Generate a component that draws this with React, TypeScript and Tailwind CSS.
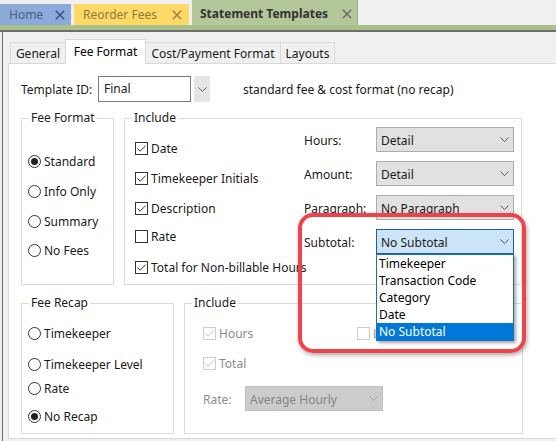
import React from "react";

const Chevron = ({ color = "#555" }: { color?: string }) => (
  <svg width="9" height="5" viewBox="0 0 9 5">
    <path d="M0.5 0.5 L4.5 4.5 L8.5 0.5" fill="none" stroke={color} strokeWidth="1" />
  </svg>
);

const CloseX = ({ color }: { color: string }) => (
  <svg width="10" height="10" viewBox="0 0 10 10">
    <path d="M0.8 0.8 L9.2 9.2 M9.2 0.8 L0.8 9.2" stroke={color} strokeWidth="1.5" />
  </svg>
);

const Check = ({ checked, disabled }: { checked?: boolean; disabled?: boolean }) => (
  <span
    className={`w-[13px] h-[13px] border bg-white flex items-center justify-center shrink-0 ${
      disabled ? "border-[#cdcdcd]" : "border-[#333333]"
    }`}
  >
    {checked && (
      <svg width="11" height="11" viewBox="0 0 11 11">
        <path
          d="M1.5 5.5 L4.2 8.2 L9.6 2.6"
          fill="none"
          stroke={disabled ? "#c2c2c2" : "#333333"}
          strokeWidth="1"
        />
      </svg>
    )}
  </span>
);

const Radio = ({ checked }: { checked?: boolean }) => (
  <span className="w-[13px] h-[13px] rounded-full border border-[#333333] bg-white flex items-center justify-center shrink-0">
    {checked && <span className="w-[7px] h-[7px] rounded-full bg-[#222222]" />}
  </span>
);

const CheckRow = ({
  label,
  checked,
  disabled,
  className = "",
}: {
  label: string;
  checked?: boolean;
  disabled?: boolean;
  className?: string;
}) => (
  <div className={`h-[20px] flex items-center gap-[3px] whitespace-nowrap ${className}`}>
    <Check checked={checked} disabled={disabled} />
    <span className={`pt-[2px] ${disabled ? "text-[#8d8d8d]" : ""}`}>{label}</span>
  </div>
);

const RadioRow = ({ label, checked, className = "" }: { label: string; checked?: boolean; className?: string }) => (
  <div className={`h-[20px] flex items-center gap-[3px] whitespace-nowrap ${className}`}>
    <Radio checked={checked} />
    <span className="pt-[2px]">{label}</span>
  </div>
);

const Combo = ({ value }: { value: string }) => (
  <div className="w-[138px] h-[25px] bg-[#e1e1e1] border border-[#adadad] flex items-center justify-between pl-[4px] pr-[4px]">
    <span className="pt-[2px]">{value}</span>
    <Chevron />
  </div>
);

const Group = ({
  title,
  className = "",
  children,
}: {
  title: string;
  className?: string;
  children?: React.ReactNode;
}) => (
  <div className={`border border-[#dcdcdc] shrink-0 ${className}`}>
    <div className="-mt-[9px] ml-[7px] px-[2px] bg-white w-fit leading-[16px]">{title}</div>
    {children}
  </div>
);

const subtotalItems = ["Timekeeper", "Transaction Code", "Category", "Date", "No Subtotal"];

export default function App() {
  return (
    <div className="w-[556px] h-[441px] bg-[#f0f0f0] overflow-hidden relative flex flex-col text-[12px] leading-[16px] text-[#1a1a1a] font-['Noto_Sans',sans-serif]">
      {/* document tabs */}
      <div className="h-[25px] flex items-end gap-[3px] shrink-0">
        <div className="w-[71px] h-[21px] bg-[#8eaadb] flex items-center justify-between pl-[9px] pr-[6px] text-[#4e5d7c]">
          <span>Home</span>
          <CloseX color="#35528f" />
        </div>
        <div className="w-[115px] h-[21px] bg-[#ffd966] flex items-center justify-between pl-[9px] pr-[7px] text-[#8c7940]">
          <span>Reorder Fees</span>
          <CloseX color="#9a8444" />
        </div>
        <div className="w-[166px] h-[25px] bg-[#b4c79b] border-r border-[#98b07c] flex items-center justify-between pl-[8px] pr-[5px] pt-[3px] font-bold text-[#333333]">
          <span>Statement Templates</span>
          <CloseX color="#6a6a6a" />
        </div>
      </div>
      <div className="h-[7px] bg-[#a9c08b] border-b-2 border-[#6e6e6e] shrink-0" />

      {/* window body */}
      <div className="flex-1 ml-[2px] border-l border-[#6b6b6b] pl-[5px] pt-[7px] flex flex-col">
        {/* page tabs */}
        <div className="flex items-end pl-[2px]">
          <div className="w-[56px] h-[21px] bg-[#f0f0f0] border border-b-0 border-[#d9d9d9] flex items-center justify-center pt-[1px]">
            General
          </div>
          <div className="-ml-px w-[81px] h-[25px] bg-white border border-b-0 border-[#d9d9d9] flex items-center justify-center relative z-10 -mb-px text-black">
            Fee Format
          </div>
          <div className="-ml-px w-[136px] h-[21px] bg-[#f0f0f0] border border-b-0 border-[#d9d9d9] flex items-center justify-center pt-[1px]">
            Cost/Payment Format
          </div>
          <div className="-ml-px w-[55px] h-[21px] bg-[#f0f0f0] border border-b-0 border-[#d9d9d9] flex items-center justify-center pt-[1px]">
            Layouts
          </div>
        </div>

        {/* page */}
        <div className="w-[600px] h-[376px] bg-white border border-[#d9d9d9] pt-[12px] pl-[12px] shrink-0">
          <div className="flex items-center h-[26px]">
            <span className="w-[77px] pt-[2px]">Template ID:</span>
            <div className="w-[93px] h-[26px] border border-[#7a7a7a] flex items-center pl-[5px]">Final</div>
            <div className="ml-[3px] w-[16px] h-[26px] bg-[#e5e5e5] flex items-center justify-center">
              <Chevron color="#606060" />
            </div>
            <span className="ml-[33px] pt-[2px]">standard fee &amp; cost format (no recap)</span>
          </div>

          {/* top groups */}
          <div className="flex gap-[10px] mt-[16px]">
            <Group title="Fee Format" className="w-[93px] h-[167px]">
              <div className="pl-[6px] pt-[25px] flex flex-col">
                <RadioRow label="Standard" checked />
                <RadioRow label="Info Only" className="mt-[10px]" />
                <RadioRow label="Summary" className="mt-[10px]" />
                <RadioRow label="No Fees" className="mt-[9px]" />
              </div>
            </Group>

            <Group title="Include" className="w-[398px] h-[167px]">
              <div className="flex">
                <div className="w-[179px] pl-[10px] pt-[12px] flex flex-col">
                  <CheckRow label="Date" checked />
                  <CheckRow label="Timekeeper Initials" checked className="mt-[10px]" />
                  <CheckRow label="Description" checked className="mt-[10px]" />
                  <CheckRow label="Rate" className="mt-[8px]" />
                  <CheckRow label="Total for Non-billable Hours" checked className="mt-[11px]" />
                </div>
                <div className="pt-[1px] flex flex-col gap-[9px]">
                  <div className="flex items-center">
                    <span className="w-[72px] pt-[2px]">Hours:</span>
                    <Combo value="Detail" />
                  </div>
                  <div className="flex items-center">
                    <span className="w-[72px] pt-[2px]">Amount:</span>
                    <Combo value="Detail" />
                  </div>
                  <div className="flex items-center">
                    <span className="w-[72px] pt-[2px]">Paragraph:</span>
                    <Combo value="No Paragraph" />
                  </div>
                  <div className="flex items-center">
                    <span className="w-[72px] pt-[2px]">Subtotal:</span>
                    <div className="relative">
                      <div className="w-[138px] h-[25px] bg-[#cce4f7] border border-[#1b5fa6] flex items-center justify-between pl-[4px] pr-[4px]">
                        <span className="pt-[2px]">No Subtotal</span>
                        <Chevron />
                      </div>
                      <div className="absolute left-0 top-[25px] z-20 w-[138px] bg-white border border-[#1c6fc0] shadow-[2px_2px_3px_rgba(0,0,0,0.35)]">
                        {subtotalItems.map((item) => (
                          <div
                            key={item}
                            className={`h-[17px] pl-[2px] pt-[1px] flex items-center ${
                              item === "No Subtotal" ? "bg-[#0078d7] text-white" : "text-black"
                            }`}
                          >
                            {item}
                          </div>
                        ))}
                      </div>
                    </div>
                  </div>
                </div>
              </div>
            </Group>
          </div>

          {/* bottom groups */}
          <div className="flex gap-[10px] mt-[18px]">
            <Group title="Fee Recap" className="w-[153px] h-[131px]">
              <div className="pl-[6px] pt-[12px] flex flex-col">
                <RadioRow label="Timekeeper" />
                <RadioRow label="Timekeeper Level" className="mt-[11px]" />
                <RadioRow label="Rate" className="mt-[4px]" />
                <RadioRow label="No Recap" checked className="mt-[8px]" />
              </div>
            </Group>

            <Group title="Include" className="w-[339px] h-[131px]">
              <div className="pl-[18px] pt-[12px] flex flex-col">
                <div className="flex">
                  <CheckRow label="Hours" checked disabled className="w-[154px]" />
                  <CheckRow label="Level Recap" disabled />
                </div>
                <CheckRow label="Total" checked disabled className="mt-[10px]" />
                <div className="flex items-center mt-[13px]">
                  <span className="w-[42px] pt-[2px] text-[#8d8d8d]">Rate:</span>
                  <div className="w-[138px] h-[25px] bg-[#cccccc] border border-[#bfbfbf] flex items-center justify-between pl-[4px] pr-[4px] text-[#838383]">
                    <span className="pt-[2px]">Average Hourly</span>
                    <Chevron color="#a3a3a3" />
                  </div>
                </div>
              </div>
            </Group>
          </div>
        </div>
      </div>

      {/* callout highlight */}
      <div className="absolute left-[298px] top-[213px] w-[228px] h-[140px] border-4 border-[#ef4349] rounded-[15px] shadow-[1px_2px_4px_rgba(0,0,0,0.35)] pointer-events-none z-30" />
    </div>
  );
}
